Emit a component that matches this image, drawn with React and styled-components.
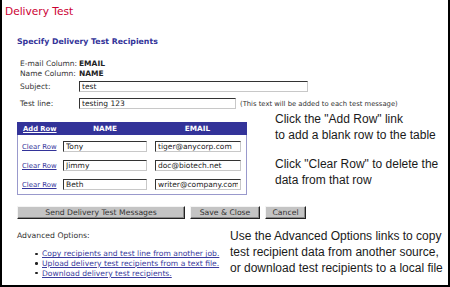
import React from 'react';
import styled, { createGlobalStyle } from 'styled-components';

const Global = createGlobalStyle`
  html, body { margin: 0; padding: 0; background: #fff; }
  #root { width: 450px; height: 287px; }
`;

const Frame = styled.div`
  position: relative;
  width: 450px;
  height: 287px;
  box-sizing: border-box;
  border: 2px solid #000;
  border-top: none;
  background: #fff;
  overflow: hidden;
  font-family: "DejaVu Sans", Verdana, sans-serif;
  color: #333;
`;

const Title = styled.h1`
  margin: 0;
  padding: 5px 0 0 3px;
  font-size: 10.6px;
  line-height: 13px;
  font-weight: normal;
  color: #cc0033;
`;

const Body = styled.div`
  padding-left: 15px;
`;

const Heading = styled.h2`
  margin: 19px 0 0;
  font-size: 7.8px;
  line-height: 10px;
  font-weight: bold;
  color: #333399;
`;

const Fields = styled.div`
  margin: 11px 0 0 3px;
  display: flex;
  flex-direction: column;
`;

const FieldRow = styled.div`
  display: flex;
  align-items: center;
  height: ${(p) => p.$h}px;
  font-size: 7.5px;
`;

const Label = styled.span`
  width: 59px;
  flex: none;
`;

const Value = styled.b`
  font-weight: bold;
  color: #222;
`;

const TextInput = styled.input`
  box-sizing: border-box;
  width: ${(p) => p.$w}px;
  height: 11px;
  margin: 0;
  margin-left: ${(p) => p.$ml || 0}px;
  padding: 0 2px;
  font-family: "DejaVu Sans", Verdana, sans-serif;
  font-size: 7.5px;
  color: #222;
  background: #fff;
  border-style: solid;
  border-width: 1px;
  border-color: #333 #c8c8c8 #c8c8c8 #333;
  outline: none;
`;

const Note = styled.span`
  margin-left: 4px;
  font-size: 6.8px;
  color: #333;
  white-space: nowrap;
`;

const Table = styled.div`
  margin-top: 10px;
  width: 230px;
`;

const HeaderRow = styled.div`
  display: grid;
  grid-template-columns: 45px 86px 99px;
  align-items: center;
  height: 13px;
  background: #333399;
  color: #fff;
  font-size: 7.3px;
  font-weight: bold;
`;

const HeaderLink = styled.a`
  padding-left: 6px;
  font-size: 6.8px;
  color: #fff;
  text-decoration: underline;
  white-space: nowrap;
  cursor: pointer;
`;

const HeadCell = styled.span`
  text-align: center;
`;

const Rows = styled.div`
  box-sizing: border-box;
  border: 1px solid #9999cc;
  border-top: none;
  padding-top: 2px;
`;

const Row = styled.div`
  display: grid;
  grid-template-columns: 44px 88px 96px;
  align-items: center;
  height: 19px;
`;

const ClearLink = styled.a`
  padding-left: 4px;
  font-size: 6.9px;
  color: #333399;
  text-decoration: underline;
  white-space: nowrap;
  cursor: pointer;
`;

const Buttons = styled.div`
  display: flex;
  gap: 5px;
  margin-top: 11px;
`;

const Button = styled.button`
  box-sizing: border-box;
  width: ${(p) => p.$w}px;
  height: 13px;
  margin: 0;
  padding: 0;
  font-family: "DejaVu Sans", Verdana, sans-serif;
  font-size: 7.7px;
  color: #333;
  background: #c4c4c4;
  border-style: solid;
  border-width: 1px;
  border-color: #f4f4f4 #222 #222 #f4f4f4;
  box-shadow: inset -1px -1px 0 #888;
  white-space: nowrap;
`;

const AdvLabel = styled.div`
  margin-top: 12px;
  font-size: 7.7px;
  line-height: 10px;
`;

const LinkList = styled.ul`
  margin: 8px 0 0;
  padding: 0 0 0 18px;
  list-style: none;
`;

const LinkItem = styled.li`
  display: flex;
  align-items: center;
  height: 9.7px;
  font-size: 7.6px;
  &::before {
    content: "";
    width: 2.5px;
    height: 2.5px;
    margin-right: 4.5px;
    border-radius: 50%;
    background: #222;
    flex: none;
  }
`;

const ListLink = styled.a`
  color: #3b3b9e;
  text-decoration: underline;
  white-space: nowrap;
  cursor: pointer;
`;

const Callout = styled.div`
  position: absolute;
  left: ${(p) => p.$x}px;
  top: ${(p) => p.$y}px;
  font-family: "Liberation Sans", Arial, sans-serif;
  font-size: 12px;
  line-height: ${(p) => p.$lh}px;
  color: #1a1a1a;
  white-space: nowrap;
`;

const recipients = [
  { name: 'Tony', email: 'tiger@anycorp.com' },
  { name: 'Jimmy', email: 'doc@biotech.net' },
  { name: 'Beth', email: 'writer@company.com' },
];

export default function App() {
  return (
    <>
      <Global />
      <Frame>
        <Title>Delivery Test</Title>
        <Body>
          <Heading>Specify Delivery Test Recipients</Heading>
          <Fields>
            <FieldRow $h={10}>
              <Label>E-mail Column:</Label>
              <Value>EMAIL</Value>
            </FieldRow>
            <FieldRow $h={10}>
              <Label>Name Column:</Label>
              <Value>NAME</Value>
            </FieldRow>
            <FieldRow $h={17}>
              <Label>Subject:</Label>
              <TextInput $w={229} defaultValue="test" />
            </FieldRow>
            <FieldRow $h={17}>
              <Label>Test line:</Label>
              <TextInput $w={157} defaultValue="testing 123" />
              <Note>(This text will be added to each test message)</Note>
            </FieldRow>
          </Fields>

          <Table>
            <HeaderRow>
              <HeaderLink>Add Row</HeaderLink>
              <HeadCell>NAME</HeadCell>
              <HeadCell>EMAIL</HeadCell>
            </HeaderRow>
            <Rows>
              {recipients.map((r) => (
                <Row key={r.name}>
                  <ClearLink>Clear Row</ClearLink>
                  <TextInput $w={84} $ml={1} defaultValue={r.name} />
                  <TextInput $w={86} $ml={5} defaultValue={r.email} />
                </Row>
              ))}
            </Rows>
          </Table>

          <Buttons>
            <Button $w={168}>Send Delivery Test Messages</Button>
            <Button $w={70}>Save &amp; Close</Button>
            <Button $w={41}>Cancel</Button>
          </Buttons>

          <AdvLabel>Advanced Options:</AdvLabel>
          <LinkList>
            <LinkItem><ListLink>Copy recipients and test line from another job.</ListLink></LinkItem>
            <LinkItem><ListLink>Upload delivery test recipients from a text file.</ListLink></LinkItem>
            <LinkItem><ListLink>Download delivery test recipients.</ListLink></LinkItem>
          </LinkList>
        </Body>

        <Callout $x={273} $y={112} $lh={15.5}>
          Click the "Add Row" link<br />to add a blank row to the table
        </Callout>
        <Callout $x={273} $y={157} $lh={15.5}>
          Click "Clear Row" to delete the<br />data from that row
        </Callout>
        <Callout $x={228} $y={228} $lh={16}>
          Use the Advanced Options links to copy<br />test recipient data from another source,<br />or download test recipients to a local file
        </Callout>
      </Frame>
    </>
  );
}
